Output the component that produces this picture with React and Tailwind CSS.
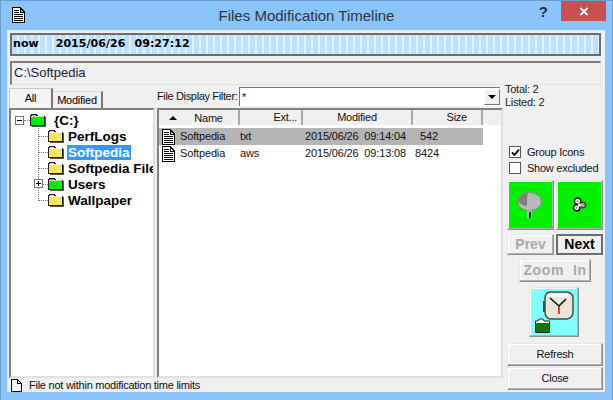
const ff = "[font-family:'Liberation_Sans',Arial,sans-serif]";

function DocIcon({ className = "" }) {
  return (
    <svg width="13" height="16" viewBox="0 0 13 16" className={className} shapeRendering="crispEdges">
      <path d="M.5 .5H8L12.5 5V15.5H.5Z M8 .5V5H12.5" fill="#fff" stroke="#000" />
      <path d="M2 3.5H7M2 5.5H7M2 7.5H11M2 9.5H11M2 11.5H11M2 13.5H11" stroke="#000" />
    </svg>
  );
}

function Folder({ green }) {
  return (
    <svg width="16" height="14" viewBox="0 0 16 14" shapeRendering="crispEdges" className="shrink-0">
      <path d="M2 1.5H6L7.5 3H14.5V12.5H.5V3Z" fill={green ? "#00f000" : "#f4e85a"} stroke="#222" />
      <path d="M1 3.5H14" stroke={green ? "#b8f0b8" : "#fff"} />
      <path d="M15.5 4V13.5H2" fill="none" stroke="#555" />
    </svg>
  );
}

function Box({ plus }) {
  return (
    <div className="w-[9px] h-[9px] border border-[#777] bg-white flex items-center justify-center relative shrink-0">
      <div className="w-[5px] h-px bg-black" />
      {plus && <div className="absolute w-px h-[5px] bg-black" />}
    </div>
  );
}

function TreeRow({ label, selected, green, expander, first }) {
  return (
    <div className="flex h-[16px] items-center relative">
      {first ? (
        <>
          <div className="ml-[4px]"><Box /></div>
          <div className="w-[6px] h-0 border-t border-dotted border-[#777] shrink-0" />
        </>
      ) : (
        <div className="w-[10px] ml-[27px] h-0 border-t border-dotted border-[#777] shrink-0" />
      )}
      {expander && (
        <div className="absolute left-[23px] top-[3px]"><Box plus /></div>
      )}
      <Folder green={green} />
      <span className={`${first ? "ml-[7px]" : "ml-[3px]"} px-[1px] h-[15px] leading-[15px] font-bold text-[13.5px] tracking-normal whitespace-nowrap ${selected ? "bg-[#3399ff] text-white" : "text-black"}`}>
        {label}
      </span>
    </div>
  );
}

function ColHead({ w, children, align = "text-center" }) {
  return (
    <div className={`${w} h-[15px] shrink-0 bg-[#f0f0f0] border-r-2 border-r-[#a8a8a8] text-[11px] leading-[14px] text-[#111] ${align}`}>
      {children}
    </div>
  );
}

function FileRow({ name, ext, mod, size, selected }) {
  return (
    <div className={`flex items-center h-[17px] w-[324px] text-[11px] tracking-[-0.15px] text-[#111] ${selected ? "bg-[#b5b5b5]" : ""}`}>
      <DocIcon className="ml-[3px] mr-[5px] shrink-0" />
      <span className="w-[60px] shrink-0">{name}</span>
      <span className="w-[65px] shrink-0">{ext}</span>
      <span className="w-[110px] shrink-0 whitespace-pre">{mod}</span>
      <span className="w-[23px] text-right">{size}</span>
    </div>
  );
}

function RaisedBtn({ children, className = "" }) {
  return (
    <div className={`flex items-center justify-center border border-t-[#e8e8e8] border-l-[#e8e8e8] border-r-[#8c8c8c] border-b-[#8c8c8c] shadow-[inset_-1px_-1px_0_#b0b0b0,inset_1px_1px_0_#fff] ${className}`}>
      {children}
    </div>
  );
}

function Dish() {
  return (
    <svg width="26" height="26" viewBox="0 0 26 26" className="-ml-[1px] -mt-[1px]">
      <ellipse cx="12.5" cy="9.5" rx="12" ry="9" fill="#b8b8b8" stroke="#8a8a8a" />
      <path d="M11 .6A12 9 0 0 0 .8 9C3 12 7 14 10 14V6Z" fill="#808080" />
      <path d="M10 18H15V20H10Z" fill="#aaa" />
      <path d="M10 20H15V26H10Z" fill="#b5b5b5" />
      <path d="M12 20H14V26H12Z" fill="#333" />
    </svg>
  );
}

function Reel() {
  return (
    <svg width="15" height="16" viewBox="0 0 16 16">
      <circle cx="6" cy="4" r="3.4" fill="#fff" stroke="#111" strokeWidth="1.6" />
      <circle cx="5" cy="11" r="3.4" fill="#fff" stroke="#111" strokeWidth="1.6" />
      <circle cx="11.5" cy="8" r="3" fill="#aaa" stroke="#444" strokeWidth="1.6" />
      <circle cx="8" cy="8" r="1.6" fill="#fff" />
      <circle cx="6" cy="4" r="1" fill="#777" />
      <circle cx="5" cy="11" r="1" fill="#777" />
    </svg>
  );
}

function Clock() {
  return (
    <svg width="48" height="48" viewBox="0 0 48 48">
      <rect x="13" y="13" width="3" height="11" fill="#444" />
      <path d="M20 4H37Q43 5 43 10V24Q43 30 37 31H20Q15 30 15 24V10Q15 5 20 4Z" fill="#e8e6da" stroke="#4a4a4a" strokeWidth="1.5" />
      <path d="M19 6H39V9H19Z" fill="#f8f7f2" />
      <path d="M20 10L29 18L36 11" fill="none" stroke="#111" strokeWidth="1.6" />
      <path d="M29 18V26" stroke="#f00" strokeWidth="1.6" />
      <path d="M5.5 33H8L9 31H13L14 33H19.5V44.5H5.5Z" fill="#fff" stroke="#222" />
      <path d="M6 35H19V44H6Z" fill="#0b7a0b" />
    </svg>
  );
}

export default function App() {
  return (
    <div className={`w-[613px] h-[400px] overflow-hidden flex flex-col bg-[#8ac4fb] border border-[#6a9ccc] border-b-0 ${ff}`}>
      <div className="h-[29px] shrink-0 flex items-start relative">
        <DocIcon className="ml-[11px] mt-[6px]" />
        <div className="absolute left-0 right-0 top-[6px] text-center text-[15px] leading-[18px] text-[#2b3440]">Files Modification Timeline</div>
        <div className="ml-auto flex items-start relative">
          <span className="text-[15px] font-bold leading-[16px] mt-[3px] mr-[13px] text-[#2a2a3a]">?</span>
          <div className="w-[45px] h-[20px] mr-[6px] bg-[#c75050] flex items-center justify-center">
            <svg width="10" height="9" viewBox="0 0 10 9"><path d="M1.5 1L8.5 8M8.5 1L1.5 8" stroke="#fff" strokeWidth="1.8" /></svg>
          </div>
        </div>
      </div>

      <div className="flex-1 ml-[6px] mr-[7px] mb-[8px] bg-[#f0f0f0] flex flex-col min-h-0 border-t border-l border-[#d8e8f8]">
        <div className="ml-[2px] mr-[4px] mt-[2px] h-[23px] shrink-0 border-2 border-[#6c6c6c] bg-[repeating-linear-gradient(90deg,#bfdfff_0,#bfdfff_5px,#e2f1ff_5px,#e2f1ff_7px)] flex items-center whitespace-pre text-[11px] font-bold tracking-[0.05px] text-black pl-[1px] font-['DejaVu_Sans',sans-serif]">
          now<span className="ml-[17px]">2015/06/26</span><span className="ml-[9px]">09:27:12</span>
        </div>

        <div className="ml-[2px] mr-[4px] mt-[5px] h-[24px] shrink-0 border-t-2 border-t-[#808080] border-l-2 border-l-[#808080] border-r border-r-[#e4e4e4] border-b border-b-[#e4e4e4] text-[13px] leading-[19px] pl-[2px] text-[#1a1a3a]">
          C:\Softpedia
        </div>

        <div className="flex flex-1 min-h-0 mt-[1px] text-[11px] tracking-[-0.25px]">
          <div className="flex flex-col w-[495px] shrink-0">
            <div className="flex flex-1 min-h-0">
              <div className="w-[147px] shrink-0 flex flex-col pt-[2px]">
                <div className="flex h-[20px] shrink-0 items-end ml-[1px]">
                  <div className="w-[44px] h-[20px] bg-[#f4f4f4] border border-[#c8c8c8] border-b-0 border-r-2 border-r-[#777] text-center leading-[18px]">All</div>
                  <div className="w-[50px] h-[17px] bg-[#f0f0f0] border-t border-t-[#d8d8d8] border-r-2 border-r-[#777] text-center leading-[17px]">Modified</div>
                </div>
                <div className="flex-1 ml-[1px] bg-white border-t-2 border-l-2 border-t-[#808080] border-l-[#808080] border-r-2 border-r-[#e0e0e0] border-b-2 border-b-[#e0e0e0] pt-[2px] overflow-hidden relative">
                  <div className="absolute left-[27px] top-[15px] h-[74px] w-0 border-l border-dotted border-[#777]" />
                  <TreeRow first green label="{C:}" />
                  <TreeRow label="PerfLogs" />
                  <TreeRow selected label="Softpedia" />
                  <TreeRow label="Softpedia File" />
                  <TreeRow green expander label="Users" />
                  <TreeRow label="Wallpaper" />
                </div>
              </div>

              <div className="w-[346px] ml-[2px] shrink-0 flex flex-col">
                <div className="h-[20px] shrink-0 flex items-center text-[#111]">
                  <span className="w-[82px] whitespace-nowrap tracking-[-0.35px]">File Display Filter:</span>
                  <div className="w-[261px] h-[19px] bg-white border-t border-l border-[#777] flex items-center justify-between pl-[2px]">
                    <span className="leading-[14px]">*</span>
                    <div className="w-[16px] h-[16px] flex items-center justify-center bg-[#f0f0f0] border border-r-[#777] border-b-[#777] border-t-white border-l-white">
                      <div className="border-x-[4px] border-x-transparent border-t-[4px] border-t-black" />
                    </div>
                  </div>
                </div>
                <div className="flex-1 mt-[2px] bg-white border-t-2 border-l-2 border-t-[#808080] border-l-[#808080] border-r-2 border-r-[#e0e0e0] border-b-2 border-b-[#e0e0e0] overflow-hidden">
                  <div className="flex">
                    <ColHead w="w-[81px] flex items-center justify-center gap-[17px] pr-[5px]">
                      <span className="border-x-[4px] border-x-transparent border-b-[4px] border-b-black" /><span>Name</span>
                    </ColHead>
                    <ColHead w="w-[63px]" align="text-right pr-[4px]">Ext...</ColHead>
                    <ColHead w="w-[110px]">Modified</ColHead>
                    <ColHead w="w-[70px]" align="text-right pr-[14px]">Size</ColHead>
                    <div className="flex-1 h-[15px] bg-[#f0f0f0]" />
                  </div>
                  <div className="mt-[3px]">
                    <FileRow selected name="Softpedia" ext="txt" mod="2015/06/26  09:14:04" size="542" />
                    <FileRow name="Softpedia" ext="aws" mod="2015/06/26  09:13:08" size="8424" />
                  </div>
                </div>
              </div>
            </div>

            <div className="h-[14px] shrink-0 flex items-center text-[#111] pl-[3px]">
              <svg width="11" height="13" viewBox="0 0 11 13" shapeRendering="crispEdges" className="mr-[7px]"><path d="M.5 .5H6.5L10.5 4.5V12.5H.5Z M6.5 .5V4.5H10.5" fill="#fff" stroke="#000" /></svg>
              File not within modification time limits
            </div>
          </div>

          <div className="flex-1 flex flex-col pl-[4px] min-w-0 -mt-[3px]">
            <div className="leading-[13px] text-[#222] h-[61px] -ml-[2px]">
              <div>Total: 2</div>
              <div>Listed: 2</div>
            </div>
            <div className="flex items-center h-[16px] pl-[2px] gap-[6px] whitespace-nowrap text-[#111]">
              <div className="w-[12px] h-[12px] bg-white border border-[#555] flex items-center justify-center shrink-0">
                <svg width="9" height="9" viewBox="0 0 9 9"><path d="M1 4.5L3.5 7L8 1.5" fill="none" stroke="#000" strokeWidth="1.8" /></svg>
              </div>
              Group Icons
            </div>
            <div className="flex items-center h-[16px] pl-[2px] gap-[6px] whitespace-nowrap text-[#111]">
              <div className="w-[12px] h-[12px] bg-white border border-[#555] shrink-0" />
              Show excluded
            </div>
            <div className="flex gap-[2px] mt-[4px]">
              <RaisedBtn className="w-[47px] h-[50px] bg-[#00f000]"><Dish /></RaisedBtn>
              <RaisedBtn className="w-[47px] h-[50px] bg-[#00f000]"><Reel /></RaisedBtn>
            </div>
            <div className="flex gap-[2px] mt-[4px]">
              <RaisedBtn className="w-[47px] h-[21px] bg-[#f0f0f0] text-[14px] tracking-normal font-bold text-[#a8a8a8]">Prev</RaisedBtn>
              <div className="w-[47px] h-[21px] flex items-center justify-center border-2 border-[#6c6c6c] text-[14px] tracking-normal font-bold">Next</div>
            </div>
            <RaisedBtn className="w-[72px] h-[23px] ml-[12px] mt-[4px] bg-[#f0f0f0] text-[14px] font-bold tracking-[0.6px] text-[#a8a8a8] whitespace-pre">Zoom  In</RaisedBtn>
            <RaisedBtn className="w-[50px] h-[50px] ml-[22px] mt-[5px] bg-[#80ffff]"><Clock /></RaisedBtn>
            <RaisedBtn className="w-[96px] h-[23px] mt-[6px] bg-[#f0f0f0] text-[#111]">Refresh</RaisedBtn>
            <RaisedBtn className="w-[96px] h-[23px] mt-[1px] bg-[#f0f0f0] text-[#111]">Close</RaisedBtn>
          </div>
        </div>
      </div>
    </div>
  );
}
